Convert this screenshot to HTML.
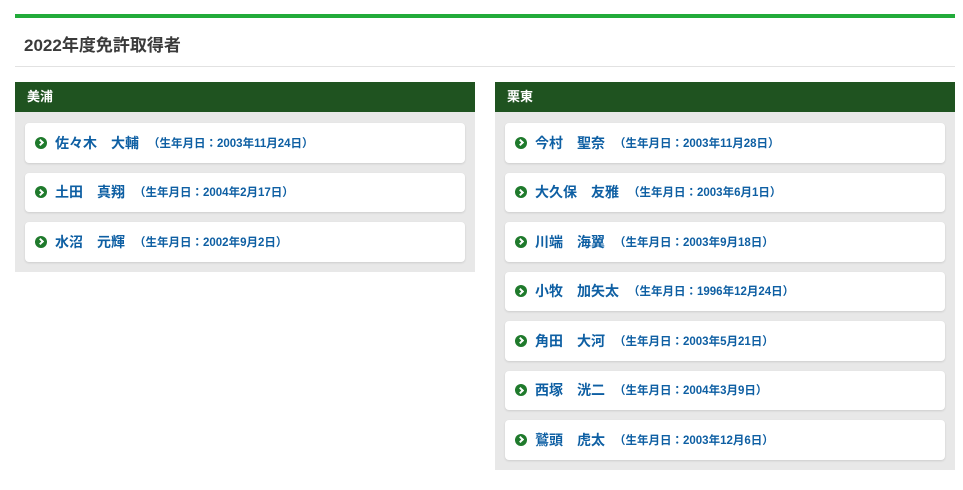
<!DOCTYPE html><html><head><meta charset="utf-8"><style>
body{margin:0;background:#fff;font-family:"Liberation Sans","Noto Sans CJK JP",sans-serif;}
.top{position:absolute;left:15px;top:14px;width:940px;height:4px;background:#22ab3a}
h1{position:absolute;left:24px;top:31px;margin:0;font-size:17px;font-weight:bold;color:#3a3a3a}
.hr{position:absolute;left:15px;top:66px;width:940px;height:1px;background:#e2e2e2}
.p{position:absolute;top:82px;width:460px;background:#e8e8e8;padding-bottom:1px}
.h{height:30px;background:#1f5320;color:#fff;font-size:13px;font-weight:bold;line-height:30px;padding-left:12px}
.c{margin:10px 10px 9.8px;height:39.5px;background:#fff;border-radius:4px;box-shadow:0 1px 2px rgba(0,0,0,.12);display:flex;align-items:center;padding-left:10px;color:#0e5fa3;font-weight:bold}
.h+.c{margin-top:11px}
.i{width:12px;height:12px;border-radius:50%;background:#1f7a2c;margin-right:8px;position:relative}
.i:after{content:"";position:absolute;left:2.5px;top:3.5px;width:3px;height:3px;border-top:2px solid #fff;border-right:2px solid #fff;transform:rotate(45deg)}
.n{font-size:14px;margin-right:9px}.d{font-size:11.5px}
</style></head><body>
<div class="top"></div><h1>2022年度免許取得者</h1><div class="hr"></div>
<div class="p" style="left:15px;height:189px"><div class="h">美浦</div>
<div class="c"><span class="i"></span><span class="n">佐々木　大輔</span><span class="d">（生年月日：2003年11月24日）</span></div>
<div class="c"><span class="i"></span><span class="n">土田　真翔</span><span class="d">（生年月日：2004年2月17日）</span></div>
<div class="c"><span class="i"></span><span class="n">水沼　元輝</span><span class="d">（生年月日：2002年9月2日）</span></div>
</div>
<div class="p" style="left:495px;height:387px"><div class="h">栗東</div>
<div class="c"><span class="i"></span><span class="n">今村　聖奈</span><span class="d">（生年月日：2003年11月28日）</span></div>
<div class="c"><span class="i"></span><span class="n">大久保　友雅</span><span class="d">（生年月日：2003年6月1日）</span></div>
<div class="c"><span class="i"></span><span class="n">川端　海翼</span><span class="d">（生年月日：2003年9月18日）</span></div>
<div class="c"><span class="i"></span><span class="n">小牧　加矢太</span><span class="d">（生年月日：1996年12月24日）</span></div>
<div class="c"><span class="i"></span><span class="n">角田　大河</span><span class="d">（生年月日：2003年5月21日）</span></div>
<div class="c"><span class="i"></span><span class="n">西塚　洸二</span><span class="d">（生年月日：2004年3月9日）</span></div>
<div class="c"><span class="i"></span><span class="n">鷲頭　虎太</span><span class="d">（生年月日：2003年12月6日）</span></div>
</div>
</body></html>
